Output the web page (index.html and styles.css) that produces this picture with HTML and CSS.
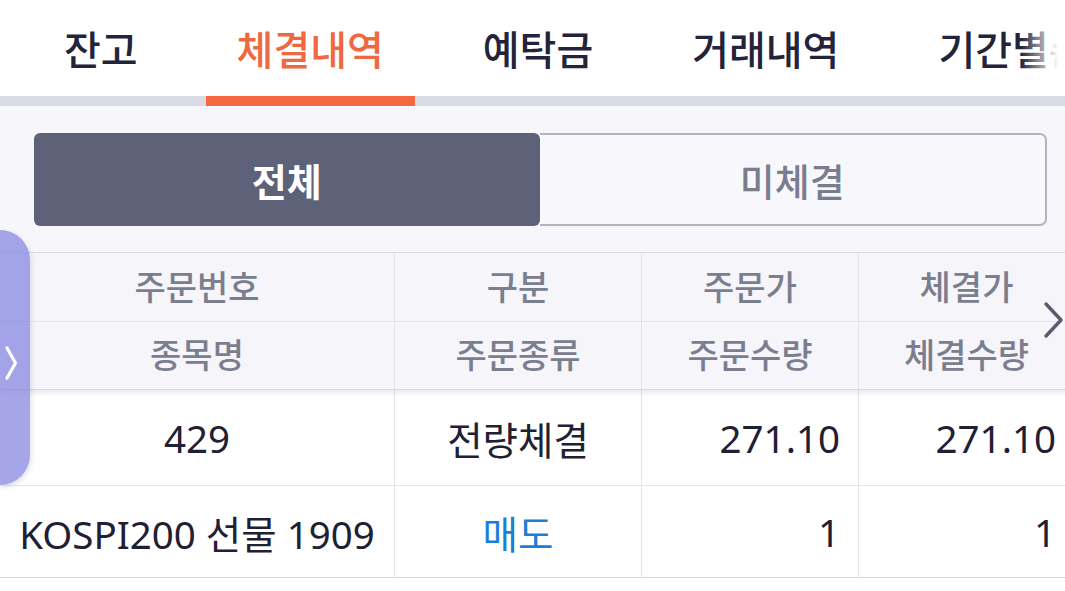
FILE: index.html
```html
<!DOCTYPE html>
<html lang="ko">
<head>
<meta charset="utf-8">
<link rel="stylesheet" href="styles.css">
</head>
<body>
<div class="screen">
  <nav class="tabs">
    <div class="tab">잔고</div>
    <div class="tab active">체결내역</div>
    <div class="tab">예탁금</div>
    <div class="tab">거래내역</div>
    <div class="tab">기간별손익</div>
    <div class="fade"></div>
  </nav>
  <div class="filter">
    <div class="segment">
      <div class="seg on">전체</div>
      <div class="seg off">미체결</div>
    </div>
  </div>
  <div class="table">
    <div class="thead">
      <div class="row head r1">
        <div class="cell">주문번호</div>
        <div class="cell">구분</div>
        <div class="cell">주문가</div>
        <div class="cell">체결가</div>
      </div>
      <div class="row head r2">
        <div class="cell">종목명</div>
        <div class="cell">주문종류</div>
        <div class="cell">주문수량</div>
        <div class="cell">체결수량</div>
      </div>
    </div>
    <div class="tbody">
      <div class="row body b1">
        <div class="cell">429</div>
        <div class="cell">전량체결</div>
        <div class="cell num">271.10</div>
        <div class="cell num">271.10</div>
      </div>
      <div class="row body b2">
        <div class="cell">KOSPI200 선물 1909</div>
        <div class="cell sell">매도</div>
        <div class="cell num">1</div>
        <div class="cell num">1</div>
      </div>
    </div>
  </div>
  <div class="side-tab">
    <svg width="14" height="34" viewBox="0 0 14 34"><path d="M3 2 L11.5 17 L3 32" fill="none" stroke="#ffffff" stroke-width="3.2" stroke-linecap="round" stroke-linejoin="round"/></svg>
  </div>
  <div class="more">
    <svg width="22" height="38" viewBox="0 0 22 38"><path d="M3 3 L18 19 L3 35" fill="none" stroke="#585c6c" stroke-width="3.4" stroke-linecap="round" stroke-linejoin="round"/></svg>
  </div>
</div>
</body>
</html>
```

FILE: styles.css
```css
* { box-sizing: border-box; }
html, body { margin: 0; padding: 0; }
body {
  width: 1065px;
  height: 591px;
  overflow: hidden;
  background: #ffffff;
  font-family: "Noto Sans", "Noto Sans CJK KR", sans-serif;
}
.screen {
  position: relative;
  width: 1065px;
  height: 591px;
  overflow: hidden;
}
.tabs {
  position: relative;
  display: flex;
  gap: 37px;
  padding-left: 33px;
  height: 106px;
  background: #ffffff;
  border-bottom: 10px solid #d9dce4;
  white-space: nowrap;
}
.tab {
  flex: none;
  padding: 0 31px;
  height: 106px;
  margin-bottom: -10px;
  line-height: 96px;
  font-family: "Noto Sans CJK KR", sans-serif;
  font-size: 40px;
  font-weight: 500;
  color: #23243a;
  border-bottom: 10px solid transparent;
}
.tab.active {
  color: #f0683f;
  border-bottom-color: #f5673e;
}
.fade {
  position: absolute;
  right: 0;
  top: 0;
  width: 44px;
  height: 96px;
  background: linear-gradient(to right, rgba(255,255,255,0), #ffffff 85%);
}
.filter {
  background: #f7f7fb;
  padding: 27px 18px 26px 34px;
}
.segment {
  display: flex;
  height: 93px;
}
.seg {
  flex: 1;
  display: flex;
  align-items: center;
  justify-content: center;
  font-family: "Noto Sans CJK KR", sans-serif;
  font-size: 38px;
}
.seg.on {
  background: #5d6279;
  color: #ffffff;
  font-weight: 700;
  border-radius: 6px;
}
.seg.off {
  color: #7a7d8d;
  font-weight: 500;
  border: 2px solid #b2b4bf;
  border-left: none;
  border-radius: 0 7px 7px 0;
  background: #f8f8fc;
}
.table {
  width: 1075px;
  border-top: 1px solid #dedee6;
}
.thead {
  position: relative;
  z-index: 1;
  background: #f5f5fa;
  box-shadow: 0 3px 5px rgba(40, 40, 70, 0.10);
}
.row {
  display: grid;
  grid-template-columns: 395px 247px 217px 216px;
}
.cell {
  display: flex;
  align-items: center;
  justify-content: center;
  border-right: 1px solid #e4e4eb;
  border-bottom: 1px solid #e4e4eb;
  white-space: nowrap;
}
.head .cell {
  font-family: "Noto Sans CJK KR", sans-serif;
  font-size: 34px;
  font-weight: 500;
  color: #7b7e8e;
}
.r1 .cell { height: 69px; padding-bottom: 4px; }
.r2 .cell { height: 68px; padding-bottom: 4px; border-bottom-color: #d8d8e0; }
.body .cell {
  font-size: 38.5px;
  color: #1f2033;
  background: #ffffff;
}
.b1 .cell { height: 96px; }
.b2 .cell { height: 92px; border-bottom-color: #d6d6de; }
.body .cell.num {
  justify-content: flex-end;
  padding-right: 18px;
}
.body .cell.sell { color: #1a7fd6; }
.side-tab {
  position: absolute;
  left: 0;
  top: 230px;
  width: 30px;
  height: 255px;
  border-radius: 0 30px 30px 0;
  background: rgba(140, 140, 226, 0.78);
  box-shadow: 1px 2px 5px rgba(60, 60, 120, 0.18);
  z-index: 3;
}
.side-tab svg {
  position: absolute;
  left: 4px;
  top: 116px;
}
.more {
  position: absolute;
  left: 1043px;
  top: 301px;
  z-index: 3;
}
.more svg { display: block; }
```
